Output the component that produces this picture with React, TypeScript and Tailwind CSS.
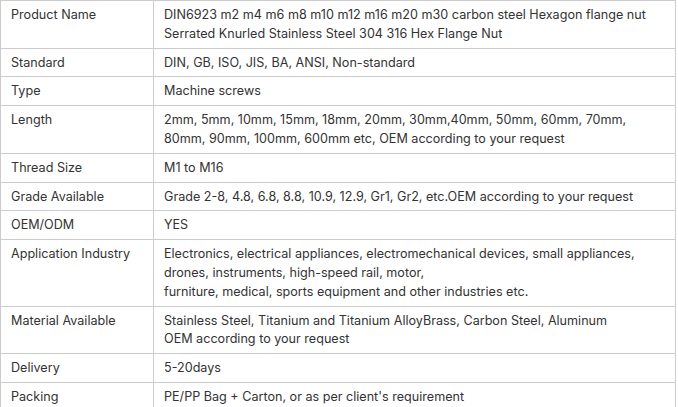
const rows: [string, string[]][] = [
  ["Product Name", ["DIN6923 m2 m4 m6 m8 m10 m12 m16 m20 m30 carbon steel Hexagon flange nut", "Serrated Knurled Stainless Steel 304 316 Hex Flange Nut"]],
  ["Standard", ["DIN, GB, ISO, JIS, BA, ANSI, Non-standard"]],
  ["Type", ["Machine screws"]],
  ["Length", ["2mm, 5mm, 10mm, 15mm, 18mm, 20mm, 30mm,40mm, 50mm, 60mm, 70mm,", "80mm, 90mm, 100mm, 600mm etc, OEM according to your request"]],
  ["Thread Size", ["M1 to M16"]],
  ["Grade Available", ["Grade 2-8, 4.8, 6.8, 8.8, 10.9, 12.9, Gr1, Gr2, etc.OEM according to your request"]],
  ["OEM/ODM", ["YES"]],
  ["Application Industry", ["Electronics, electrical appliances, electromechanical devices, small appliances,", "drones, instruments, high-speed rail, motor,", "furniture, medical, sports equipment and other industries etc."]],
  ["Material Available", ["Stainless Steel, Titanium and Titanium AlloyBrass, Carbon Steel, Aluminum", "OEM according to your request"]],
  ["Delivery", ["5-20days"]],
  ["Packing", ["PE/PP Bag + Carton, or as per client's requirement"]],
];

export default function App() {
  return (
    <div className="bg-white font-['Inter',sans-serif] text-[12.6px] leading-[18.8px] text-[#333]">
      <table className="w-[676px] table-fixed border-collapse">
        <colgroup>
          <col className="w-[153px]" />
          <col />
        </colgroup>
        <tbody>
          {rows.map(([label, lines]) => (
            <tr key={label}>
              <td className="border border-[#ccc] px-[10px] pt-[5px] pb-[4px] align-top">{label}</td>
              <td className="border border-[#ccc] px-[10px] pt-[5px] pb-[4px] align-top">
                {lines.map((l, i) => (
                  <div key={i}>{l}</div>
                ))}
              </td>
            </tr>
          ))}
        </tbody>
      </table>
    </div>
  );
}
